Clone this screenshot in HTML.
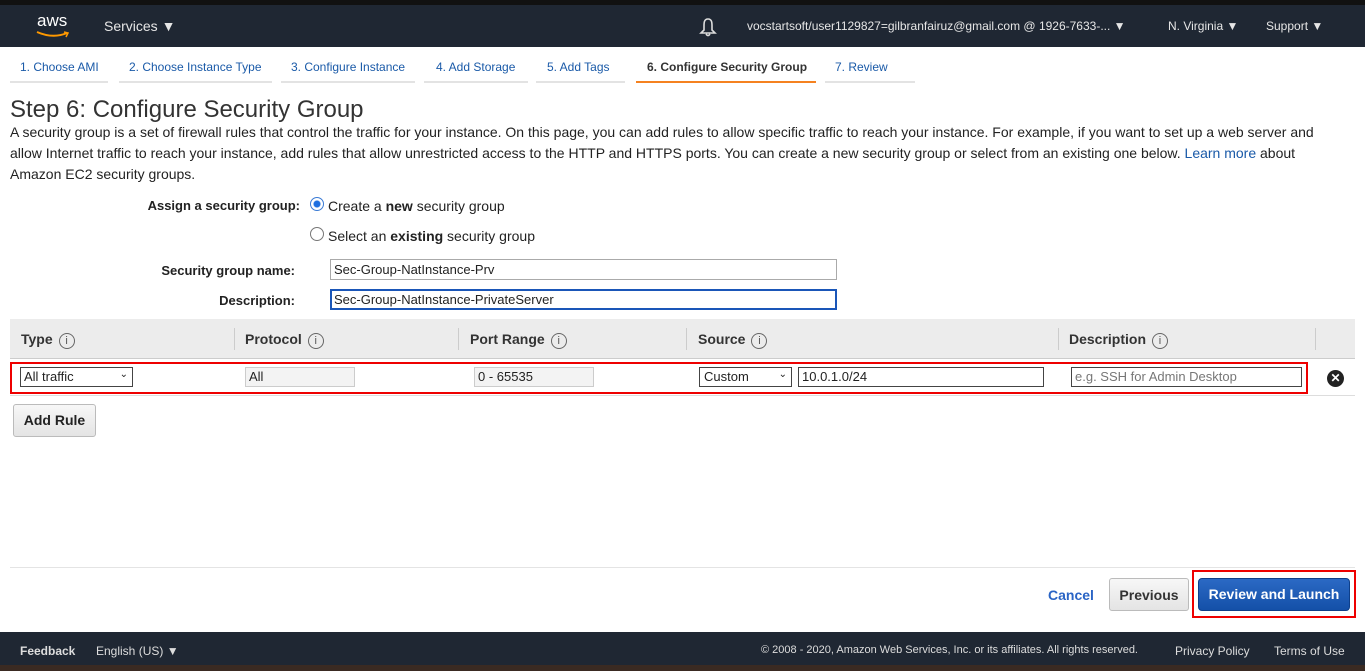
<!DOCTYPE html>
<html><head><style>
*{box-sizing:border-box;margin:0;padding:0}
body{width:1365px;height:671px;overflow:hidden;background:#fff;font-family:"Liberation Sans",Arial,sans-serif;color:#222;position:relative}
.a{position:absolute;white-space:nowrap}
.top{left:0;top:0;width:1365px;height:6px;background:#111}
.hdr{left:0;top:5px;width:1365px;height:42px;background:#1f2733}
.hdr .a{color:#e6e6e6;font-size:13px}
.tab{font-size:12px;color:#1a5aa8;top:60px}
.ul{height:2px;background:#e3e3e3;top:81px}
.lbl{font-weight:bold;font-size:13px;text-align:right}
.in{border:1px solid #aaa;height:21px;font-size:13px;padding:2px 3px;background:#fff}
.th{font-weight:bold;font-size:14px;top:331px;color:#333}
.i{display:inline-block;width:16px;height:16px;border:1px solid #666;border-radius:50%;font-size:11px;text-align:center;line-height:14px;font-weight:normal;margin-left:6px;vertical-align:0px;color:#555}
.sep{top:328px;width:1px;height:22px;background:#ccc}
.btn{border:1px solid #bbb;border-radius:3px;background:linear-gradient(#f7f7f7,#e4e4e4);font-weight:bold;font-size:14px;text-align:center}
.ft{color:#ddd;font-size:12px;top:644px}
</style></head><body>
<div class="a top"></div>
<div class="a hdr">
<div class="a" style="left:37px;top:6px;font-size:17px;color:#fff">aws</div>
<svg class="a" style="left:35px;top:26px" width="36" height="8"><path d="M2 1 Q18 8 32 2" stroke="#f90" stroke-width="2" fill="none"/><path d="M29 1 L33 2 L31 6" stroke="#f90" stroke-width="1.5" fill="none"/></svg>
<div class="a" style="left:104px;top:13px;font-size:14px">Services ▼</div>
<svg class="a" style="left:699px;top:12px" width="18" height="20"><path d="M9 2 C5 2 5 6 5 9 L5 13 L2 16 L16 16 L13 13 L13 9 C13 6 13 2 9 2 Z M7 17 Q9 20 11 17" stroke="#ddd" stroke-width="1.6" fill="none"/></svg>
<div class="a" style="left:747px;top:14px;font-size:12px">vocstartsoft/user1129827=gilbranfairuz@gmail.com @ 1926-7633-... ▼</div>
<div class="a" style="left:1168px;top:14px;font-size:12px">N. Virginia ▼</div>
<div class="a" style="left:1266px;top:14px;font-size:12px">Support ▼</div>
</div>
<div class="a tab" style="left:20px">1. Choose AMI</div><div class="a ul" style="left:10px;width:98px"></div>
<div class="a tab" style="left:129px">2. Choose Instance Type</div><div class="a ul" style="left:119px;width:153px"></div>
<div class="a tab" style="left:291px">3. Configure Instance</div><div class="a ul" style="left:281px;width:134px"></div>
<div class="a tab" style="left:436px">4. Add Storage</div><div class="a ul" style="left:424px;width:104px"></div>
<div class="a tab" style="left:547px">5. Add Tags</div><div class="a ul" style="left:536px;width:89px"></div>
<div class="a tab" style="left:647px;color:#333;font-weight:bold">6. Configure Security Group</div><div class="a ul" style="left:636px;width:180px;background:#f58220"></div>
<div class="a tab" style="left:835px">7. Review</div><div class="a ul" style="left:825px;width:90px"></div>
<div class="a" style="left:10px;top:96px;font-size:24px;color:#333">Step 6: Configure Security Group</div>
<div class="a" style="left:10px;top:122px;font-size:14px;line-height:21px;white-space:normal;width:1325px;color:#222">A security group is a set of firewall rules that control the traffic for your instance. On this page, you can add rules to allow specific traffic to reach your instance. For example, if you want to set up a web server and allow Internet traffic to reach your instance, add rules that allow unrestricted access to the HTTP and HTTPS ports. You can create a new security group or select from an existing one below. <span style="color:#1a5aa8">Learn more</span> about Amazon EC2 security groups.</div>
<div class="a lbl" style="left:100px;width:200px;top:198px">Assign a security group:</div>
<div class="a" style="left:310px;top:197px;width:14px;height:14px;border-radius:50%;border:1px solid #3a7bd5;background:radial-gradient(#1e6fe0 3px,#fff 4px)"></div>
<div class="a" style="left:328px;top:198px;font-size:14px">Create a <b>new</b> security group</div>
<div class="a" style="left:310px;top:227px;width:14px;height:14px;border-radius:50%;border:1px solid #777"></div>
<div class="a" style="left:328px;top:228px;font-size:14px">Select an <b>existing</b> security group</div>
<div class="a lbl" style="left:100px;width:195px;top:263px">Security group name:</div>
<div class="a in" style="left:330px;top:259px;width:507px">Sec-Group-NatInstance-Prv</div>
<div class="a lbl" style="left:100px;width:195px;top:293px">Description:</div>
<div class="a in" style="left:330px;top:289px;width:507px;border:2px solid #1a56b8;padding:1px 2px">Sec-Group-NatInstance-PrivateServer</div>
<div class="a" style="left:10px;top:319px;width:1345px;height:40px;background:#ececec;border-bottom:1px solid #ccc"></div>
<div class="a th" style="left:21px">Type<span class="i">i</span></div>
<div class="a sep" style="left:234px"></div>
<div class="a th" style="left:245px">Protocol<span class="i">i</span></div>
<div class="a sep" style="left:458px"></div>
<div class="a th" style="left:470px">Port Range<span class="i">i</span></div>
<div class="a sep" style="left:686px"></div>
<div class="a th" style="left:698px">Source<span class="i">i</span></div>
<div class="a sep" style="left:1058px"></div>
<div class="a th" style="left:1069px">Description<span class="i">i</span></div>
<div class="a sep" style="left:1315px"></div>
<div class="a" style="left:10px;top:395px;width:1345px;height:1px;background:#ddd"></div>
<div class="a" style="left:10px;top:362px;width:1298px;height:32px;border:2px solid #e00"></div>
<div class="a in" style="left:20px;top:367px;width:113px;border-color:#444;height:20px;padding:1px 3px">All traffic<span style="position:absolute;right:4px;font-size:10px">⌄</span></div>
<div class="a in" style="left:245px;top:367px;width:110px;background:#f3f3f3;border-color:#ccc;height:20px;padding:1px 3px">All</div>
<div class="a in" style="left:474px;top:367px;width:120px;background:#f3f3f3;border-color:#ccc;height:20px;padding:1px 3px">0 - 65535</div>
<div class="a in" style="left:699px;top:367px;width:93px;border-color:#444;height:20px;padding:1px 4px">Custom<span style="position:absolute;right:4px;font-size:10px">⌄</span></div>
<div class="a in" style="left:798px;top:367px;width:246px;border-color:#444;height:20px;padding:1px 3px">10.0.1.0/24</div>
<div class="a in" style="left:1071px;top:367px;width:231px;border-color:#444;height:20px;padding:1px 3px;color:#777">e.g. SSH for Admin Desktop</div>
<div class="a" style="left:1327px;top:370px;width:17px;height:17px;border-radius:50%;background:#222;color:#fff;font-size:12px;font-weight:bold;text-align:center;line-height:17px">✕</div>
<div class="a btn" style="left:13px;top:404px;width:83px;height:33px;line-height:31px">Add Rule</div>
<div class="a" style="left:10px;top:567px;width:1345px;height:1px;background:#e4e4e4"></div>
<div class="a" style="left:1048px;top:587px;font-size:14px;font-weight:bold;color:#2a64c5">Cancel</div>
<div class="a btn" style="left:1109px;top:578px;width:80px;height:33px;line-height:33px;color:#333">Previous</div>
<div class="a" style="left:1192px;top:570px;width:164px;height:48px;border:2px solid #e00"></div>
<div class="a" style="left:1198px;top:578px;width:152px;height:33px;border-radius:4px;background:linear-gradient(#2b69c4,#1450a8);border:1px solid #0e3f8a;color:#fff;font-weight:bold;font-size:14px;text-align:center;line-height:31px">Review and Launch</div>
<div class="a" style="left:0;top:632px;width:1365px;height:34px;background:#1f2733"></div>
<div class="a" style="left:0;top:665px;width:1365px;height:6px;background:#3a2a22"></div>
<div class="a ft" style="left:20px;font-weight:bold">Feedback</div>
<div class="a ft" style="left:96px">English (US) ▼</div>
<div class="a ft" style="left:761px;font-size:11px">© 2008 - 2020, Amazon Web Services, Inc. or its affiliates. All rights reserved.</div>
<div class="a ft" style="left:1175px">Privacy Policy</div>
<div class="a ft" style="left:1274px">Terms of Use</div>
</body></html>
